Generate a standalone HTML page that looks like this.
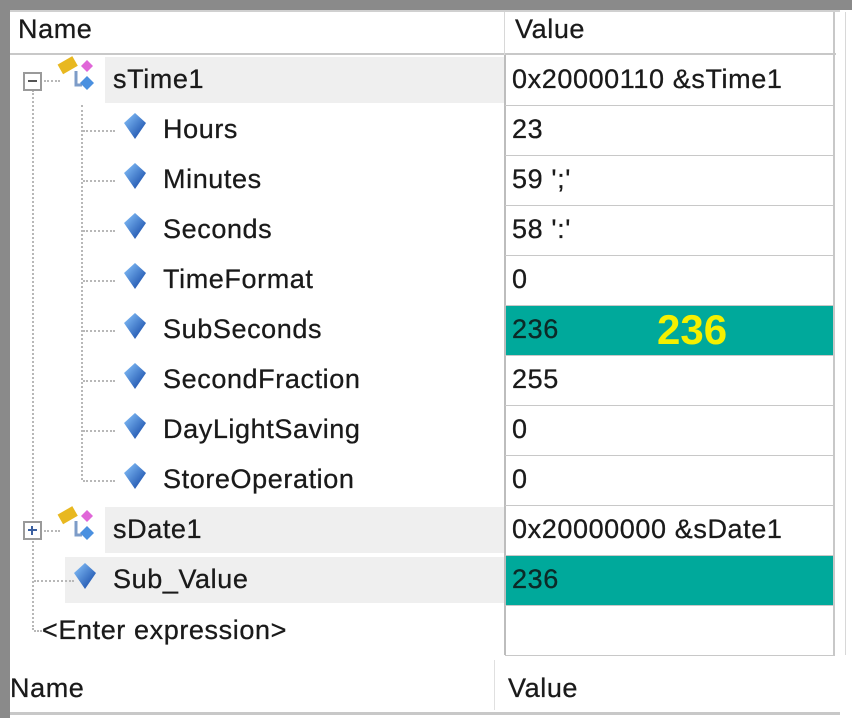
<!DOCTYPE html>
<html><head><meta charset="utf-8"><style>
*{margin:0;padding:0;box-sizing:border-box}
body{width:852px;height:718px;background:#fff;position:relative;overflow:hidden;font-family:"Liberation Sans",sans-serif;color:#1a1a1a}
.a{position:absolute}
.t{position:absolute;font-size:27px;line-height:30px;letter-spacing:0.6px;white-space:nowrap;-webkit-text-stroke:0.3px #1a1a1a}
.hl{position:absolute;left:505px;width:330px;height:1px;background:#c8c8c8}
.dv{position:absolute;border-left:2px dotted #b8b8b8}
.dh{position:absolute;border-top:2px dotted #b8b8b8;height:0}
</style></head><body>
<div class="a" style="left:0;top:0;width:852px;height:10px;background:#8a8a8a"></div>
<div class="a" style="left:0;top:0;width:10px;height:718px;background:#8a8a8a"></div>
<div class="a" style="left:10px;top:10px;width:830px;height:2px;background:#d0d0d0"></div>
<div class="t" style="left:18px;top:14px">Name</div>
<div class="t" style="left:515px;top:14px">Value</div>
<div class="a" style="left:10px;top:53px;width:826px;height:2px;background:#c8c8c8"></div>
<div class="a" style="left:504px;top:12px;width:1px;height:43px;background:#d8d8d8"></div>
<div class="a" style="left:504px;top:55px;width:2px;height:600px;background:#bdbdbd"></div>
<div class="a" style="left:833px;top:12px;width:2px;height:643px;background:#c8c8c8"></div>
<div class="a" style="left:845px;top:12px;width:1px;height:643px;background:#d8d8d8"></div>
<div class="hl" style="top:105px"></div><div class="hl" style="top:155px"></div><div class="hl" style="top:205px"></div><div class="hl" style="top:255px"></div><div class="hl" style="top:305px"></div><div class="hl" style="top:355px"></div><div class="hl" style="top:405px"></div><div class="hl" style="top:455px"></div><div class="hl" style="top:505px"></div><div class="hl" style="top:555px"></div><div class="hl" style="top:605px"></div><div class="hl" style="top:655px"></div>
<div class="a" style="left:105px;top:57px;width:399px;height:46px;background:#efefef"></div>
<div class="a" style="left:105px;top:507px;width:399px;height:46px;background:#efefef"></div>
<div class="a" style="left:65px;top:557px;width:439px;height:46px;background:#efefef"></div>
<div class="a" style="left:506px;top:306px;width:327px;height:49px;background:#00a99b"></div>
<div class="a" style="left:506px;top:556px;width:327px;height:49px;background:#00a99b"></div>
<div class="dv" style="left:32px;top:90px;height:540px"></div>
<div class="dv" style="left:81px;top:105px;height:375px"></div>
<div class="dh" style="left:44px;top:80px;width:16px"></div>
<div class="dh" style="left:44px;top:530px;width:16px"></div>
<div class="dh" style="left:34px;top:580px;width:40px"></div>
<div class="dh" style="left:34px;top:630px;width:8px"></div>
<div class="dh" style="left:83px;top:130px;width:32px"></div><div class="dh" style="left:83px;top:180px;width:32px"></div><div class="dh" style="left:83px;top:230px;width:32px"></div><div class="dh" style="left:83px;top:280px;width:32px"></div><div class="dh" style="left:83px;top:330px;width:32px"></div><div class="dh" style="left:83px;top:380px;width:32px"></div><div class="dh" style="left:83px;top:430px;width:32px"></div><div class="dh" style="left:83px;top:480px;width:32px"></div>
<div class="a" style="left:23px;top:72px;width:19px;height:19px;border:2px solid #9a9a9a;background:#fff"><div class="a" style="left:3px;top:6px;width:9px;height:2px;background:#555"></div></div>
<div class="a" style="left:23px;top:521px;width:19px;height:19px;border:2px solid #9a9a9a;background:#fff"><div class="a" style="left:3px;top:6px;width:9px;height:2px;background:#3a5fa0"></div><div class="a" style="left:6px;top:3px;width:2px;height:9px;background:#3a5fa0"></div></div>
<svg class="a" style="left:56px;top:55px" width="42" height="38" viewBox="0 0 42 38"><rect x="3" y="5" width="17" height="11" fill="#e8b820" transform="rotate(-30 11 10)"/><path d="M20 16v14h6" stroke="#7d9cc8" stroke-width="3" fill="none"/><path d="M31 5l6 6-6 6-6-6z" fill="#e066d8"/><path d="M31 21l7 7-7 7-7-7z" fill="#4a90e0"/></svg>
<svg class="a" style="left:56px;top:505px" width="42" height="38" viewBox="0 0 42 38"><rect x="3" y="5" width="17" height="11" fill="#e8b820" transform="rotate(-30 11 10)"/><path d="M20 16v14h6" stroke="#7d9cc8" stroke-width="3" fill="none"/><path d="M31 5l6 6-6 6-6-6z" fill="#e066d8"/><path d="M31 21l7 7-7 7-7-7z" fill="#4a90e0"/></svg>
<svg width="0" height="0" style="position:absolute"><defs><linearGradient id="g" x1="0" y1="0" x2="1" y2="1"><stop offset="0" stop-color="#8cc8ff"/><stop offset="1" stop-color="#0b3fa0"/></linearGradient></defs></svg>
<svg class="a" style="left:122px;top:112px" width="26" height="28"><path d="M13 1l11 10-11 16-11-16z" fill="url(#g)"/></svg>
<svg class="a" style="left:122px;top:162px" width="26" height="28"><path d="M13 1l11 10-11 16-11-16z" fill="url(#g)"/></svg>
<svg class="a" style="left:122px;top:212px" width="26" height="28"><path d="M13 1l11 10-11 16-11-16z" fill="url(#g)"/></svg>
<svg class="a" style="left:122px;top:262px" width="26" height="28"><path d="M13 1l11 10-11 16-11-16z" fill="url(#g)"/></svg>
<svg class="a" style="left:122px;top:312px" width="26" height="28"><path d="M13 1l11 10-11 16-11-16z" fill="url(#g)"/></svg>
<svg class="a" style="left:122px;top:362px" width="26" height="28"><path d="M13 1l11 10-11 16-11-16z" fill="url(#g)"/></svg>
<svg class="a" style="left:122px;top:412px" width="26" height="28"><path d="M13 1l11 10-11 16-11-16z" fill="url(#g)"/></svg>
<svg class="a" style="left:122px;top:462px" width="26" height="28"><path d="M13 1l11 10-11 16-11-16z" fill="url(#g)"/></svg>
<svg class="a" style="left:72px;top:562px" width="26" height="28"><path d="M13 1l11 10-11 16-11-16z" fill="url(#g)"/></svg>
<div class="t" style="left:113px;top:64px">sTime1</div>
<div class="t" style="left:163px;top:114px">Hours</div>
<div class="t" style="left:163px;top:164px">Minutes</div>
<div class="t" style="left:163px;top:214px">Seconds</div>
<div class="t" style="left:163px;top:264px">TimeFormat</div>
<div class="t" style="left:163px;top:314px">SubSeconds</div>
<div class="t" style="left:163px;top:364px">SecondFraction</div>
<div class="t" style="left:163px;top:414px">DayLightSaving</div>
<div class="t" style="left:163px;top:464px">StoreOperation</div>
<div class="t" style="left:113px;top:514px">sDate1</div>
<div class="t" style="left:113px;top:564px">Sub_Value</div>
<div class="t" style="left:42px;top:615px">&lt;Enter expression&gt;</div>
<div class="t" style="left:512px;top:64px">0x20000110 &amp;sTime1</div>
<div class="t" style="left:512px;top:114px">23</div>
<div class="t" style="left:512px;top:164px">59 ';'</div>
<div class="t" style="left:512px;top:214px">58 ':'</div>
<div class="t" style="left:512px;top:264px">0</div>
<div class="t" style="left:512px;top:314px;color:#0a2a28">236</div>
<div class="t" style="left:657px;top:308px;font-size:42px;line-height:44px;font-weight:bold;color:#f5f000;-webkit-text-stroke:0;letter-spacing:0">236</div>
<div class="t" style="left:512px;top:364px">255</div>
<div class="t" style="left:512px;top:414px">0</div>
<div class="t" style="left:512px;top:464px">0</div>
<div class="t" style="left:512px;top:514px">0x20000000 &amp;sDate1</div>
<div class="t" style="left:512px;top:564px;color:#0a2a28">236</div>
<div class="a" style="left:494px;top:660px;width:1px;height:50px;background:#e0e0e0"></div>
<div class="t" style="left:10px;top:673px">Name</div>
<div class="t" style="left:508px;top:673px">Value</div>
<div class="a" style="left:10px;top:712px;width:830px;height:3px;background:#c8c8c8"></div>
</body></html>
